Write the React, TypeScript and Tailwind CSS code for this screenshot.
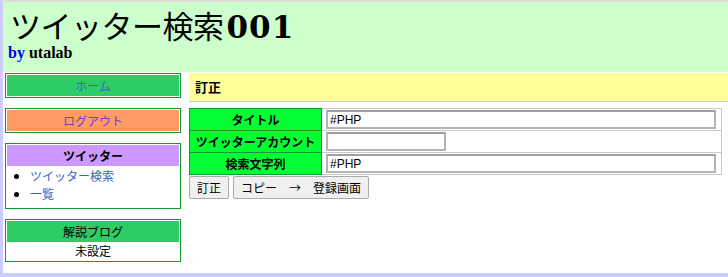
import React from "react";

const jp = "font-['Noto_Sans_CJK_JP','Noto_Sans',sans-serif]";

function SideButton({ label, fill, color }: { label: string; fill: string; color: string }) {
    return (
        <div className="border border-[#119933] p-px">
            <div className={`${fill} h-[21px] flex items-center justify-center text-[12px] ${color}`}>
                {label}
            </div>
        </div>
    );
}

export default function App() {
    return (
        <div className={`${jp} h-[277px] w-[728px] overflow-hidden border-t-2 border-t-[#dddddd] border-l-[3px] border-l-[#ccccff] border-b-4 border-b-[#ccccff] bg-white text-black`}>
            {/* header */}
            <header className="h-[70px] bg-[#ccffcc] pl-[7px] pt-[6px]">
                <h1 className="h-[34px] text-[31px] leading-[34px] font-normal tracking-[-0.5px] whitespace-nowrap">
                    ツイッター検索
                    <span className="font-['DejaVu_Serif',serif] font-bold text-[31px] leading-none ml-[3px] tracking-[1px]">001</span>
                </h1>
                <div className="font-['Liberation_Serif',serif] font-bold text-[16px] leading-[16px] -ml-[2px] mt-[3px]">
                    <span className="text-[#0000ee]">by</span> utalab
                </div>
            </header>

            <div className="flex pt-px">
                {/* sidebar */}
                <aside className="w-[176px] ml-[2px] flex flex-col gap-[10px]">
                    <SideButton label="ホーム" fill="bg-[#2ecc66]" color="text-[#3366cc]" />
                    <SideButton label="ログアウト" fill="bg-[#ff9966]" color="text-[#6644cc]" />

                    <div className="border border-[#119933] p-px h-[66px]">
                        <div className="bg-[#cc99ff] h-[21px] flex items-center justify-center text-[12px] font-bold">
                            ツイッター
                        </div>
                        <ul className="list-disc pl-[23px] mt-[1px] text-[12px] leading-[18px] text-[#3366cc]">
                            <li className="marker:text-black">ツイッター検索</li>
                            <li className="marker:text-black">一覧</li>
                        </ul>
                    </div>

                    <div className="border border-[#119933] p-px h-[43px]">
                        <div className="bg-[#2ecc66] h-[21px] flex items-center justify-center text-[12px]">
                            解説ブログ
                        </div>
                        <div className="text-center text-[12px] leading-[18px]">未設定</div>
                    </div>
                </aside>

                {/* main */}
                <main className="flex-1 ml-[8px]">
                    <div className="h-[29px] bg-[#ffff99] border-b border-[#cccccc] flex items-center pl-[6px] text-[13px] font-bold">
                        訂正
                    </div>

                    <table className="mt-[6px] w-[533px] border-collapse border border-[#c8c8c8] text-[12px]">
                        <tbody>
                            {[
                                { label: "タイトル", value: "#PHP", wide: true },
                                { label: "ツイッターアカウント", value: "", wide: false },
                                { label: "検索文字列", value: "#PHP", wide: true },
                            ].map((row) => (
                                <tr key={row.label} className="h-[22px] border-b border-[#c8c8c8]">
                                    <td className="w-[132px] bg-[#00ff33] border border-[#119933] text-center font-bold leading-[20px] p-0">
                                        {row.label}
                                    </td>
                                    <td className="pl-[4px] pr-[5px] py-0">
                                        <input
                                            readOnly
                                            value={row.value}
                                            className={`${row.wide ? "w-full" : "w-[120px]"} h-[19px] block border-2 border-[#b4b4b4] border-t-[#a0a0a0] bg-white px-[2px] text-[12px] font-['Liberation_Sans',sans-serif] outline-none`}
                                        />
                                    </td>
                                </tr>
                            ))}
                        </tbody>
                    </table>

                    <div className="flex gap-[4px] mt-px">
                        <button className="h-[23px] w-[40px] border border-[#aaaaaa] rounded-[2px] bg-[#f0f0f0] text-[12px]">
                            訂正
                        </button>
                        <button className="h-[23px] w-[136px] border border-[#aaaaaa] rounded-[2px] bg-[#f0f0f0] text-[12px]">
                            コピー　→　登録画面
                        </button>
                    </div>
                </main>
            </div>
        </div>
    );
}
